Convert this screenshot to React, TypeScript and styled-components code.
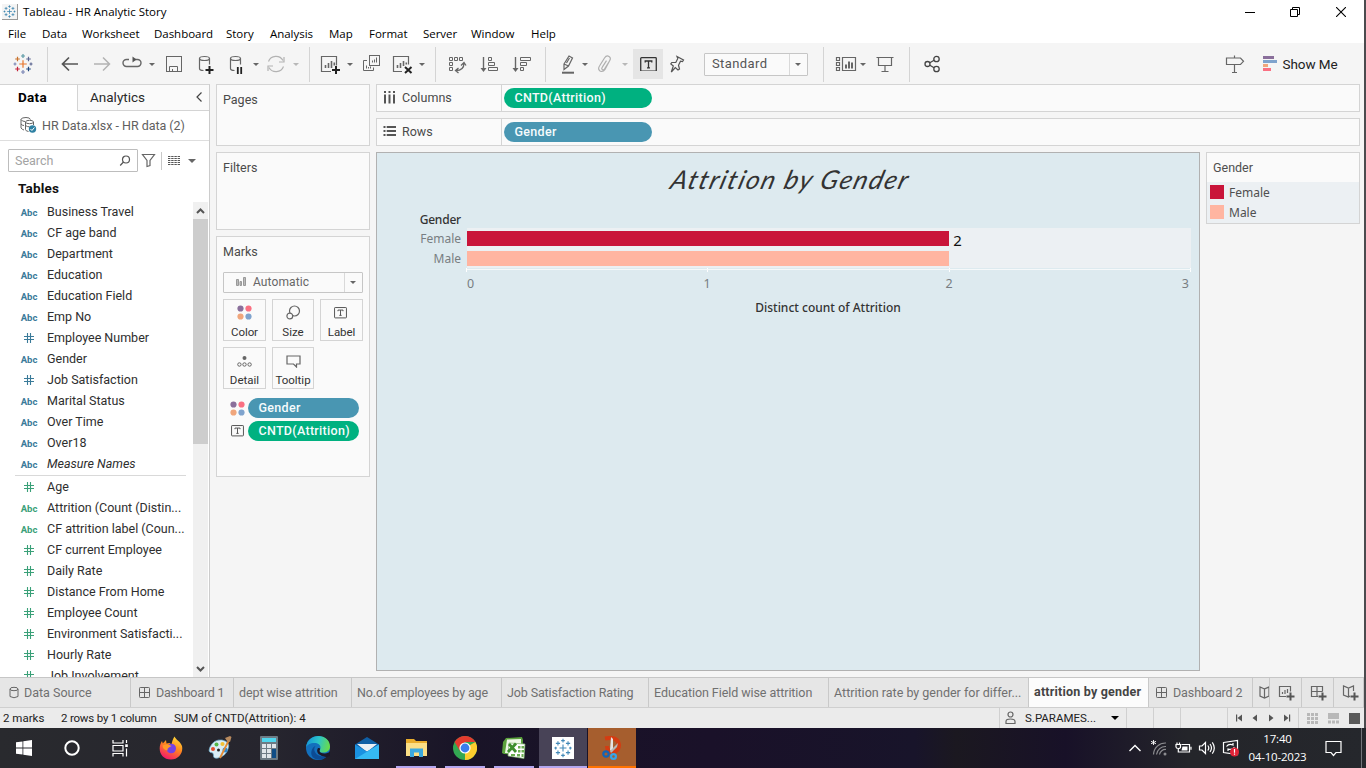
import React from "react";
import styled, { createGlobalStyle, css } from "styled-components";

const ui = `Roboto, "Open Sans", sans-serif`;
const system = `"Open Sans", "Noto Sans", sans-serif`;
const chartFont = `"Noto Sans", "Open Sans", sans-serif`;
const line = "#d4d4d4";

const GlobalStyle = createGlobalStyle`
  * { box-sizing: border-box; }
  body { margin: 0; background: #f5f5f5; overflow: hidden; }
  svg { display: block; flex: none; }
`;

type TextProps = { $ls?: number; $size?: number; $color?: string };
const Text = styled.span<TextProps>`
  white-space: nowrap;
  letter-spacing: ${(p) => p.$ls ?? 0}px;
  ${(p) => p.$size && `font-size: ${p.$size}px;`}
  ${(p) => p.$color && `color: ${p.$color};`}
`;

const Screen = styled.div`
  width: 1366px;
  height: 768px;
  display: flex;
  flex-direction: column;
  overflow: hidden;
  font-family: ${ui};
  font-size: 13px;
  color: #333;
`;
const Window = styled.div`
  height: 728px;
  flex: none;
  display: flex;
  flex-direction: column;
  background: #f5f5f5;
  border-right: 2px solid #4b4b4e;
`;

/* Title bar and menu */
const TitleBar = styled.header`
  height: 23px;
  flex: none;
  display: flex;
  align-items: center;
  background: #fff;
  padding-left: 2px;
  color: #000;
  font-family: ${system};
  font-size: 11.5px;
`;
const AppIcon = styled.div`
  width: 16px;
  height: 16px;
  margin-right: 5px;
  background: #f4f4f4;
  border-right: 1px solid #999;
  border-bottom: 1px solid #999;
`;
const WindowButtons = styled.div`
  margin-left: auto;
  display: flex;
  height: 20px;
  align-items: center;
`;
const WindowButton = styled.div`
  width: 46px;
  display: flex;
  justify-content: center;
`;
const MenuBar = styled.nav`
  height: 20px;
  flex: none;
  display: flex;
  align-items: center;
  background: #fff;
  color: #000;
  font-family: ${system};
  font-size: 11.5px;
  padding-left: 8px;
`;
const MenuItem = styled.div<{ $w: number }>`
  width: ${(p) => p.$w}px;
  letter-spacing: -0.03px;
  white-space: nowrap;
`;

/* Toolbar */
const Toolbar = styled.div`
  height: 41px;
  flex: none;
  padding-top: 1px;
  display: flex;
  align-items: center;
`;
const Tool = styled.div<{ $ml: number; $w?: number; $h?: number; $active?: boolean }>`
  margin-left: ${(p) => p.$ml}px;
  width: ${(p) => p.$w ?? 24}px;
  height: ${(p) => p.$h ?? 24}px;
  flex: none;
  display: flex;
  align-items: center;
  justify-content: center;
  ${(p) => p.$active && css`background: #e5e5e5;`}
`;
const Divider = styled.div<{ $ml: number }>`
  width: 1px;
  height: 35px;
  margin-left: ${(p) => p.$ml}px;
  background: ${line};
`;
const Caret = styled.div<{ $ml?: number; $dim?: boolean; $size?: number; $color?: string }>`
  width: 8px;
  margin-left: ${(p) => p.$ml ?? 0}px;
  flex: none;
  display: flex;
  justify-content: center;
  &::after {
    content: "";
    border: ${(p) => p.$size ?? 3}px solid transparent;
    border-top: ${(p) => p.$size ?? 3}px solid ${(p) => (p.$dim ? "#b8b8b8" : p.$color ?? "#666")};
    border-bottom: 0;
  }
`;
const Dropdown = styled.div<{ $h: number; $w: number; $ml?: number }>`
  margin-left: ${(p) => p.$ml ?? 0}px;
  width: ${(p) => p.$w}px;
  height: ${(p) => p.$h}px;
  flex: none;
  display: flex;
  border: 1px solid #c6c6c6;
  border-radius: 1px;
  color: #555;
  background: #fafafa;
`;
const DropdownValue = styled.div<{ $pad: number; $gap?: number }>`
  flex: 1;
  display: flex;
  align-items: center;
  gap: ${(p) => p.$gap ?? 0}px;
  padding: 0 0 1px ${(p) => p.$pad}px;
  border-right: 1px solid #d9d9d9;
`;
const DropdownArrow = styled.div`
  width: 17px;
  padding-right: 1px;
  display: flex;
  align-items: center;
  justify-content: center;
`;

/* Workspace */
const Workspace = styled.main`
  height: 593px;
  flex: none;
  display: flex;
  gap: 6px;
`;
const DataPane = styled.aside`
  width: 210px;
  height: 593px;
  flex: none;
  background: #fff;
  border-top: 1px solid ${line};
  border-right: 1px solid #ccc;
  display: flex;
  flex-direction: column;
`;
const PaneTabs = styled.div`
  height: 26px;
  flex: none;
  display: flex;
`;
const DataTab = styled.div`
  width: 78px;
  padding-left: 18px;
  line-height: 25px;
  font-weight: 700;
  font-size: 13.5px;
  letter-spacing: 0.3px;
  color: #000;
  border-right: 1px solid ${line};
`;
const AnalyticsTab = styled.div`
  flex: 1;
  display: flex;
  align-items: center;
  justify-content: space-between;
  padding: 0 5px 2px 12px;
  background: #fafafa;
  border-bottom: 1px solid ${line};
  font-size: 13.5px;
  color: #2a2a2a;
`;
const SourceRow = styled.div`
  height: 30px;
  flex: none;
  display: flex;
  align-items: center;
  gap: 5px;
  padding: 0 0 1px 19px;
  border-bottom: 1px solid #dedede;
  color: #5f5f5f;
  font-size: 12.5px;
`;
const SearchRow = styled.div`
  height: 39px;
  flex: none;
  display: flex;
  align-items: center;
  padding-left: 8px;
`;
const SearchBox = styled.div`
  width: 130px;
  height: 23px;
  border: 1px solid #bdbdbd;
  border-radius: 1px;
  display: flex;
  align-items: center;
  justify-content: space-between;
  padding: 0 6px;
  color: #a3a3a3;
`;
const SmallRule = styled.div`
  width: 1px;
  height: 18px;
  margin: 0 6px 0 5px;
  background: #c8c8c8;
`;
const TablesHeading = styled.div`
  height: 21px;
  flex: none;
  padding-left: 18px;
  line-height: 17px;
  font-size: 13.5px;
  letter-spacing: 0.2px;
  font-weight: 700;
  color: #111;
`;
const FieldArea = styled.div`
  flex: 1;
  min-height: 0;
  display: flex;
  overflow: hidden;
`;
const FieldList = styled.div`
  flex: 1;
  min-width: 0;
`;
const FieldRow = styled.div<{ $italic?: boolean }>`
  height: 21px;
  display: flex;
  align-items: center;
  color: #2e2e2e;
  font-size: 12.5px;
  ${(p) => p.$italic && "font-style: italic;"}
`;
const FieldType = styled.div<{ $measure: boolean }>`
  width: 18px;
  margin: 1px 9px 0 20px;
  display: flex;
  justify-content: center;
  font-size: 9.5px;
  font-weight: 700;
  font-style: normal;
  color: ${(p) => (p.$measure ? "#3aa078" : "#3a7a99")};
`;
const FieldRule = styled.div`
  height: 1px;
  margin: 1px 7px 0 15px;
  background: #d9d9d9;
`;
const Scrollbar = styled.div`
  width: 15px;
  margin: 1px 1px 0 0;
  display: flex;
  flex-direction: column;
  justify-content: space-between;
  align-items: center;
  background: #f0f0f0;
  padding-bottom: 5px;
`;
const ScrollTop = styled.div`
  width: 15px;
  & > svg { margin: 6px auto 5px; }
`;
const Thumb = styled.div`
  height: 225px;
  background: #cdcdcd;
`;

/* Shelves and cards */
const CardColumn = styled.div`
  width: 154px;
  flex: none;
  display: flex;
  flex-direction: column;
  gap: 6px;
`;
const Card = styled.section<{ $h: number }>`
  height: ${(p) => p.$h}px;
  flex: none;
  background: #fafafa;
  border: 1px solid ${line};
  padding: 0 6px;
  color: #4a4a4a;
  font-size: 12.5px;
`;
const CardTitle = styled.div<{ $h?: number }>`
  height: ${(p) => p.$h ?? 30}px;
  line-height: 30px;
`;
const MarkGrid = styled.div`
  display: grid;
  grid-template-columns: 43px 42px 43px;
  grid-auto-rows: 42px;
  gap: 6px;
  margin-top: 6px;
`;
const MarkButton = styled.div`
  border: 1px solid ${line};
  display: flex;
  flex-direction: column;
  align-items: center;
  justify-content: space-between;
  padding: 5px 0 1px;
  color: #333;
  font-size: 11.5px;
  letter-spacing: -0.05px;
`;
const MarkPills = styled.div`
  display: flex;
  flex-direction: column;
  gap: 3px;
  margin-top: 9px;
`;
const MarkPillRow = styled.div`
  display: flex;
  align-items: center;
  padding-left: 7px;
  gap: 3px;
`;
const Pill = styled.div<{ $green?: boolean; $w: number }>`
  width: ${(p) => p.$w}px;
  height: 20px;
  border-radius: 10px;
  padding-left: 10.5px;
  line-height: 20px;
  font-size: 12.5px;
  font-weight: 500;
  letter-spacing: 0.3px;
  white-space: nowrap;
  color: #f5fbfc;
  background: ${(p) => (p.$green ? "#00b180" : "#4996b2")};
`;
const MainColumn = styled.div`
  width: 984px;
  flex: none;
  display: flex;
  flex-direction: column;
  gap: 6px;
`;
const Shelf = styled.div`
  height: 28px;
  flex: none;
  display: flex;
  align-items: center;
  border: 1px solid ${line};
  background: #fafafa;
  font-size: 12.5px;
  color: #4a4a4a;
`;
const ShelfLabel = styled.div`
  width: 125px;
  height: 26px;
  display: flex;
  align-items: center;
  gap: 6px;
  padding: 0 0 1px 6px;
  margin-right: 2px;
  border-right: 1px solid ${line};
`;
const ViewRow = styled.div`
  display: flex;
  gap: 6px;
  align-items: flex-start;
`;

/* Chart */
const View = styled.section`
  width: 824px;
  height: 519px;
  flex: none;
  display: flex;
  flex-direction: column;
  background: #ddeaef;
  border: 1px solid #b1b1b1;
  font-family: ${chartFont};
  font-size: 12px;
  color: #787e82;
`;
const ChartTitle = styled.h1`
  margin: 0;
  height: 58px;
  line-height: 53px;
  text-align: center;
  font-family: Lato, sans-serif;
  font-style: italic;
  font-weight: 400;
  font-size: 26px;
  letter-spacing: 1.6px;
  color: #333;
  padding-left: 4px;
  transform: skewX(-16deg);
`;
const ChartBody = styled.div`
  display: grid;
  grid-template-columns: 84px 6px 724px;
  text-align: right;
`;
const Dimension = styled.div`
  height: 18px;
  line-height: 17px;
  color: #333;
  font-weight: 500;
  letter-spacing: -0.2px;
`;
const RowLabel = styled.div`
  height: 20px;
  line-height: 20px;
`;
const Plot = styled.div`
  height: 40px;
  margin-top: 17px;
  padding-top: 3px;
  display: flex;
  flex-direction: column;
  gap: 5px;
  background: #ecf0f3;
`;
const BarRow = styled.div`
  height: 15px;
  display: flex;
  align-items: center;
`;
const Bar = styled.div<{ $color: string }>`
  height: 15px;
  background: ${(p) => p.$color};
`;
const BarValue = styled.span`
  margin: 4px 0 0 4px;
  font-size: 15px;
  line-height: 15px;
  color: #111;
`;
const Ticks = styled.div`
  grid-column: 3;
  height: 4px;
  margin: -1px 0 -3px -1px;
  display: flex;
  justify-content: space-between;
  & > i { width: 1px; background: #fff; }
`;
const Axis = styled.div`
  grid-column: 3;
  height: 28px;
  display: grid;
  grid-template-columns: 120px 240px 244px 1fr;
  align-items: end;
  border-top: 1px solid #f6f9fa;
  font-size: 12.5px;
  padding: 0 2px 5px 0;
  text-align: center;
  line-height: 17px;
  & > :first-child { text-align: left; }
  & > :last-child { text-align: right; }
`;
const AxisTitle = styled.div`
  grid-column: 3;
  line-height: 16px;
  margin-top: 3px;
  text-align: center;
  padding-right: 2px;
  font-weight: 500;
  color: #333;
`;
const Legend = styled.section`
  width: 154px;
  height: 72px;
  background: #fafafa;
  border: 1px solid ${line};
  display: flex;
  flex-direction: column;
  color: #4f4f4f;
  font-family: ${chartFont};
  font-size: 12px;
`;
const LegendTitle = styled.div`
  height: 29px;
  line-height: 30px;
  padding-left: 6px;
  font-family: ${ui};
  font-size: 12.5px;
`;
const LegendItems = styled.div`
  flex: 1;
  background: #ecf0f3;
`;
const LegendItem = styled.div<{ $color: string }>`
  height: 20px;
  display: flex;
  align-items: center;
  gap: 5px;
  padding-left: 3px;
  &::before {
    content: "";
    width: 14px;
    height: 14px;
    background: ${(p) => p.$color};
  }
`;

/* Sheet tabs and status bar */
const SheetTabs = styled.div`
  height: 31px;
  flex: none;
  display: flex;
  border-top: 1px solid #c6c6c6;
  border-bottom: 1px solid #cfcfcf;
  background: #e6e6e6;
`;
const SheetTab = styled.div<{ $w: number; $active?: boolean; $pad?: number }>`
  width: ${(p) => p.$w}px;
  flex: none;
  display: flex;
  align-items: center;
  gap: 5px;
  overflow: hidden;
  padding-left: ${(p) => p.$pad ?? 5}px;
  border-right: 1px solid #c9c9c9;
  color: #707070;
  font-size: 12.5px;
  letter-spacing: -0.07px;
  ${(p) => p.$active && css`
    background: #fcfcfc;
    color: #444;
    font-weight: 700;
    padding-bottom: 2px;
  `}
`;
const StatusBar = styled.div`
  height: 20px;
  flex: none;
  display: flex;
  align-items: center;
  background: #ebebeb;
  color: #222;
  font-size: 11.5px;
  padding-left: 3px;
`;
const StatusText = styled.div<{ $w: number }>`
  width: ${(p) => p.$w}px;
  flex: none;
  white-space: nowrap;
`;
const StatusCell = styled.div<{ $w: number }>`
  width: ${(p) => p.$w}px;
  height: 20px;
  flex: none;
  display: flex;
  align-items: center;
  border-left: 1px solid #d0d0d0;
`;

/* Taskbar */
const Taskbar = styled.footer`
  height: 40px;
  flex: none;
  display: flex;
  background: linear-gradient(90deg, #292a2e 0%, #26252e 20%, #191427 34%, #1a1129 52%, #18142a 67%, #1b1820 70%, #181128 78%, #24252a 87%, #25272c 100%);
  color: #fff;
`;
const TaskButton = styled.div<{ $w?: number; $bar?: string; $bg?: string }>`
  width: ${(p) => p.$w ?? 48}px;
  height: 40px;
  flex: none;
  margin-right: ${(p) => (p.$w ? 0 : 1)}px;
  display: flex;
  align-items: center;
  justify-content: center;
  background: ${(p) => p.$bg ?? "transparent"};
  border-bottom: 2px solid ${(p) => p.$bar ?? "transparent"};
  border-top: 2px solid ${(p) => p.$bg ?? "transparent"};
  ${(p) => p.$bar && !p.$bg && css`
    width: 40px;
    margin: 0 5px 0 4px;
  `}
`;
const TableauTile = styled.div`
  width: 22px;
  height: 22px;
  background: #fff;
`;
const Tray = styled.div`
  margin-left: auto;
  display: flex;
  align-items: center;
`;
const TrayItem = styled.div<{ $w?: number }>`
  width: ${(p) => p.$w ?? 24}px;
  display: flex;
  justify-content: center;
`;
const Clock = styled.div`
  width: 70px;
  padding-right: 1px;
  text-align: center;
  font-family: ${system};
  font-size: 11.5px;
  line-height: 18px;
  letter-spacing: -0.2px;
`;
const PeekLine = styled.div`
  width: 1px;
  height: 40px;
  margin: 0 4px 0 8px;
  background: #72747a;
`;

/* Icons */
type IcoProps = { c?: string; s?: number; h?: number; sw?: number; children: React.ReactNode };
const Ico = ({ c = "#666", s = 24, h, sw = 1.2, children }: IcoProps) => (
  <svg width={s} height={h ?? s} viewBox={`0 0 ${s} ${h ?? s}`} fill="none" stroke={c} strokeWidth={sw}>
    {children}
  </svg>
);

const marks: [number, number, number, string][] = [
  [12, 12, 3.8, "#e8762c"], [6.5, 7, 2.3, "#c8722c"], [17.5, 7, 2.3, "#5c6692"],
  [6.5, 17, 2.3, "#c4243b"], [17.5, 17, 2.3, "#1f457d"], [12, 4, 2, "#5b9aa5"],
  [12, 20, 2, "#7b86b5"], [4, 12, 1.5, "#7b86b5"], [20, 12, 1.5, "#5c6692"],
];
const TableauMark = ({ size = 24, mono }: { size?: number; mono?: string }) => (
  <svg width={size} height={size} viewBox="0 0 24 24" fill="none" strokeWidth="1.2">
    {marks.map(([x, y, r, c], i) => (
      <path key={i} stroke={mono ?? c} d={`M${x - r} ${y}h${2 * r}M${x} ${y - r}v${2 * r}`} />
    ))}
  </svg>
);

const Cylinder = () => (
  <>
    <ellipse cx="11.500" cy="6.500" rx="5" ry="2" />
    <path d="M6.500 6.500v10q0 2 4 2M16.500 6.500v6" />
  </>
);
const LabelIcon = ({ s = 17, c = "#555" }: { s?: number; c?: string }) => (
  <svg width={s} height={s * 0.88} viewBox="0 0 17 15" fill="none" stroke={c} strokeWidth="1.3">
    <rect x="0.700" y="0.700" width="15.600" height="13.600" rx="0.800" />
    <path d="M5.200 5.500v-1.500h6.600v1.500M8.500 4v7M7 11h3" />
  </svg>
);
const ColorDots = () => (
  <svg width="15" height="15" viewBox="0 0 15 15">
    <circle cx="3.500" cy="3.500" r="3.100" fill="#8a6f9b" />
    <circle cx="11.500" cy="3.500" r="3.100" fill="#fa7082" />
    <circle cx="3.500" cy="11.500" r="3.100" fill="#f0a67c" />
    <circle cx="11.500" cy="11.500" r="3.100" fill="#7fa3cd" />
  </svg>
);
const HashIcon = () => (
  <svg width="12" height="10" viewBox="0 0 12 10" fill="none" stroke="currentColor" strokeWidth="1.1">
    <path d="M4.500 0v10M7.500 0v10M1 3.500h10M1 6.500h10" />
  </svg>
);
const GridIcon = () => (
  <Ico s={12} sw={1}><rect x="0.500" y="0.500" width="10" height="10" rx="0.800" /><path d="M5.500 0.500v10M0.500 5.500h10" /></Ico>
);

const dimensions: [string, string][] = [
  ["Abc", "Business Travel"], ["Abc", "CF age band"], ["Abc", "Department"],
  ["Abc", "Education"], ["Abc", "Education Field"], ["Abc", "Emp No"],
  ["#", "Employee Number"], ["Abc", "Gender"], ["#", "Job Satisfaction"],
  ["Abc", "Marital Status"], ["Abc", "Over Time"], ["Abc", "Over18"], ["Abc", "Measure Names"],
];
const measures: [string, string][] = [
  ["#", "Age"], ["Abc", "Attrition (Count (Distin..."], ["Abc", "CF attrition label (Coun..."],
  ["#", "CF current Employee"], ["#", "Daily Rate"], ["#", "Distance From Home"],
  ["#", "Employee Count"], ["#", "Environment Satisfacti..."], ["#", "Hourly Rate"], ["#", "Job Involvement"],
];

const Field = ({ type, name, measure }: { type: string; name: string; measure?: boolean }) => (
  <FieldRow $italic={name === "Measure Names"}>
    <FieldType $measure={!!measure}>{type === "#" ? <HashIcon /> : type}</FieldType>
    {name}
  </FieldRow>
);

const ToolbarSection = () => (
  <Toolbar>
    <Tool $ml={11}><TableauMark size={24} /></Tool>
    <Divider $ml={12} />
    <Tool $ml={10}><Ico c="#555" sw={1.7}><path d="M20 12H5M11 5.500L4.500 12l6.500 6.500" /></Ico></Tool>
    <Tool $ml={8}><Ico c="#b3b3b3" sw={1.5}><path d="M4 12h15M13 5.500l6.500 6.500-6.500 6.500" /></Ico></Tool>
    <Tool $ml={6}><Ico sw={1.4}><path d="M9 7.500H6.500a3.500 3.500 0 0 0 0 7h11a3.500 3.500 0 0 0 0-7h-4.500" /><path d="M12.500 4.500v6l4-3z" fill="#555" stroke="none" /></Ico></Tool>
    <Caret $ml={4} />
    <Tool $ml={6}><Ico sw={1}><rect x="4.500" y="4.500" width="15" height="15" /><path d="M7.500 19.500v-5h8v5M10.500 19.500v-2.500" /></Ico></Tool>
    <Tool $ml={7}><Ico><Cylinder /><path d="M12.500 18h8M16.500 14v8" stroke="#222" strokeWidth="2" /></Ico></Tool>
    <Tool $ml={7}><Ico><Cylinder /><path d="M13.800 15v7M17.200 15v7" stroke="#222" strokeWidth="1.800" /></Ico></Tool>
    <Caret $ml={4} />
    <Tool $ml={4}><Ico c="#b3b3b3"><path d="M4.500 9.500a8 8 0 0 1 14.500-1M19.500 14.500a8 8 0 0 1-14.500 1" /><path d="M20 5v5h-5M4 19v-5h5" /></Ico></Tool>
    <Caret $ml={4} $dim />
    <Divider $ml={9} />
    <Tool $ml={8}><Ico><path d="M13 19.500H3.500v-15h15v9" /><path d="M7.500 16v-3M10.500 16v-5M13.500 16V9M16.300 13.500v-3" strokeWidth="1.600" /><path d="M14 18h8M18 14v8" stroke="#222" strokeWidth="2" /></Ico></Tool>
    <Caret $ml={4} />
    <Tool $ml={5}><Ico sw={1}><rect x="10.500" y="3.500" width="10" height="10" /><path d="M8 8.500H4.500v10h10v-3M7.500 16.500v-3M9.500 16.500v-1.500M11.500 16.500v-2M13.500 10.500v-2M15.500 10.500v-3M17.500 10.500v-5" /></Ico></Tool>
    <Tool $ml={7}><Ico><path d="M12 19.500H3.500v-15h15v8" /><path d="M7.500 16v-3M10.500 16v-5M13.500 14V9M16.300 12.500v-2" strokeWidth="1.600" /><path d="M15 15l6.500 6M21.500 15L15 21" stroke="#222" strokeWidth="2" /></Ico></Tool>
    <Caret $ml={4} />
    <Divider $ml={9} />
    <Tool $ml={9}><Ico sw={1}><path d="M4.500 5.500h3v3h-3zM9.500 5.500h3v3h-3zM14.500 5.500h3v3h-3zM4.500 10.500h3v3h-3zM4.500 15.500h3v3h-3z" /><path d="M11 18.500q8 0 8-7.500M16 13.500l3-3 2 3M13.500 16l-3 2.500 3 2.500" strokeWidth="1.300" /></Ico></Tool>
    <Tool $ml={9}><Ico><path d="M5.500 5v13" strokeWidth="1.400" /><path d="M2.500 16h6l-3 4z" fill="#666" stroke="none" /><path d="M10.500 5.500h3v3h-3zM10.500 10.500h6v3h-6zM10.500 15.500h9v3h-9z" strokeWidth="1" /></Ico></Tool>
    <Tool $ml={8}><Ico><path d="M5.500 5v13" strokeWidth="1.400" /><path d="M2.500 16h6l-3 4z" fill="#666" stroke="none" /><path d="M10.500 5.500h10v3h-10zM10.500 10.500h6v3h-6zM10.500 15.500h3v3h-3z" strokeWidth="1" /></Ico></Tool>
    <Divider $ml={11} />
    <Tool $ml={9}><Ico><path d="M9 12L14 4l3.500 2-4 8-4.500 3.500zM9 12l4.500 2M14.500 6l-3 5" /><path d="M7 20.700h12" strokeWidth="2" /></Ico></Tool>
    <Caret $ml={2} />
    <Tool $ml={4}><Ico c="#b0b0b0"><path d="M17 8l-5 9.500q-2 3-5 1.500-2.500-2-.5-5l5-8q2-3 4.500-1.500 2.500 1.500.5 4.500l-5 8q-1 1.500-2.200.700-1.200-1 0-2.500l4.200-6.500" /></Ico></Tool>
    <Caret $ml={4} $dim />
    <Tool $ml={4} $w={30} $h={30} $active><LabelIcon c="#333" /></Tool>
    <Tool $ml={2}><Ico c="#555"><path d="M12 4.500l6.500 3.500-1 1.500-2-.300-2 4 1 3.800-1.500 1-2.700-2.500-4 4.500 2-6-2.500-2 1-1.500h4l2-4z" /></Ico></Tool>
    <Dropdown $ml={15} $w={104} $h={23}>
      <DropdownValue $pad={7}><Text $size={13} $ls={0.4}>Standard</Text></DropdownValue>
      <DropdownArrow><Caret $size={3.5} /></DropdownArrow>
    </Dropdown>
    <Divider $ml={15} />
    <Tool $ml={10}><Ico><path d="M2.500 5.500h3v3h-3zM2.500 10.500h3v3h-3zM2.500 15.500h3v3h-3zM8.500 5.500h13v13h-13z" /><path d="M12 16.500v-4M15 16.500V9.500M18 16.500v-6" strokeWidth="2" /></Ico></Tool>
    <Caret $ml={1} />
    <Tool $ml={6}><Ico><path d="M3.500 5.500h17M5.500 5.500v8h13v-8M12 13.500v6M8.500 19.500h7" /></Ico></Tool>
    <Divider $ml={12} />
    <Tool $ml={10}><Ico c="#444" sw={1.3}><circle cx="7.500" cy="12" r="2.500" /><circle cx="16.500" cy="7" r="2.700" /><circle cx="16.500" cy="17" r="2.700" /><path d="M9.800 10.800l4.300-2.600M9.800 13.200l4.300 2.600" /></Ico></Tool>
    <Tool $ml={278}><Ico><path d="M4.500 6h14l3 3.300-3 3.200h-14zM12.500 3.500v2.500M12.500 12.500v8.500M10 20.500h5" /></Ico></Tool>
    <Tool $ml={17} $w={14}>
      <svg width="14" height="16" viewBox="0 0 14 16">
        <path fill="#8a6f9b" d="M0 0h11v3H0z" /><path fill="#7fa3cd" d="M0 4h14v3H0z" />
        <path fill="#f0a67c" d="M0 8h5v3H0z" /><path fill="#fa7082" d="M0 12h8v3H0z" />
      </svg>
    </Tool>
    <Tool $ml={5} $w={56}><Text $size={13.5} $ls={-0.1} $color="#222">Show Me</Text></Tool>
  </Toolbar>
);

const DataSection = () => (
  <DataPane>
    <PaneTabs>
      <DataTab>Data</DataTab>
      <AnalyticsTab>
        Analytics
        <Ico s={10} h={12} c="#444"><path d="M7.500 1.500L3 6l4.500 4.500" /></Ico>
      </AnalyticsTab>
    </PaneTabs>
    <SourceRow>
      <Ico s={18} sw={1}>
        <path d="M2 12V3.500Q2 1.500 7 1.500q4 0 4.500 2M2 3.500Q3 5.500 6 5.500M2 8q1 1.500 3 1.500M2 12q1 1.500 3 2" />
        <ellipse cx="10.500" cy="6" rx="4" ry="1.700" /><path d="M6.500 6v7.500q0 1.500 3 2M14.500 6v3M6.500 9.500q2 1.500 4 1.300" />
        <circle cx="13.500" cy="13" r="3.700" fill="#2f81a3" stroke="none" /><path d="M11.500 13l1.400 1.500 2.500-3" stroke="#fff" />
      </Ico>
      <Text $ls={-0.03}>HR Data.xlsx - HR data (2)</Text>
    </SourceRow>
    <SearchRow>
      <SearchBox>
        <Text $size={12.5}>Search</Text>
        <Ico s={12} c="#555"><circle cx="7" cy="4.500" r="3.500" /><path d="M4.500 7L1.200 10.500" /></Ico>
      </SearchBox>
      <Tool $ml={3} $w={15} $h={15}><Ico s={15}><path d="M1.500 1.500h12L9 7.500v5l-3 1v-6z" /></Ico></Tool>
      <SmallRule />
      <Ico s={12} h={10} sw={1} c="#555"><path d="M0 0.500h12M0 2.500h12M0 4.500h12M0 6.500h12M0 8.500h12" strokeDasharray="2.400 0.800" /></Ico>
      <Caret $ml={8} $size={4} />
    </SearchRow>
    <TablesHeading>Tables</TablesHeading>
    <FieldArea>
      <FieldList>
        {dimensions.map(([t, n]) => <Field key={n} type={t} name={n} />)}
        <FieldRule />
        {measures.map(([t, n]) => <Field key={n} type={t} name={n} measure />)}
      </FieldList>
      <Scrollbar>
        <ScrollTop>
          <Ico s={9} h={6} c="#555" sw={2}><path d="M1 5l3.500-3.500L8 5" /></Ico>
          <Thumb />
        </ScrollTop>
        <Ico s={9} h={6} c="#555" sw={2}><path d="M1 1l3.500 3.500L8 1" /></Ico>
      </Scrollbar>
    </FieldArea>
  </DataPane>
);

const CardsSection = () => (
  <CardColumn>
    <Card $h={62}><CardTitle>Pages</CardTitle></Card>
    <Card $h={78}><CardTitle>Filters</CardTitle></Card>
    <Card $h={241}>
      <CardTitle $h={35}>Marks</CardTitle>
      <Dropdown $w={140} $h={21}>
        <DropdownValue $pad={12} $gap={7}>
          <Ico s={10} sw={1} c="#999"><path d="M0.500 2.500h2v6h-2zM4 4.500h1.500v4H4zM7.500 0.500h2v8h-2z" fill="#bbb" /></Ico>
          <Text $size={12} $ls={0.1} $color="#666">Automatic</Text>
        </DropdownValue>
        <DropdownArrow><Caret $size={3.5} /></DropdownArrow>
      </Dropdown>
      <MarkGrid>
        <MarkButton><ColorDots /><Text $ls={-0.1}>Color</Text></MarkButton>
        <MarkButton><Ico s={15}><circle cx="8.500" cy="6" r="5" /><circle cx="3.800" cy="11" r="2.900" fill="#fafafa" /></Ico><Text>Size</Text></MarkButton>
        <MarkButton><Tool $ml={-2} $w={14} $h={16}><LabelIcon s={13} /></Tool><Text $ls={-0.1}>Label</Text></MarkButton>
        <MarkButton><Ico s={15} sw={1}><circle cx="7.500" cy="5" r="2" fill="#666" stroke="none" /><circle cx="2.400" cy="11.500" r="1.700" /><circle cx="7.500" cy="11.500" r="1.700" /><circle cx="12.600" cy="11.500" r="1.700" /></Ico><Text>Detail</Text></MarkButton>
        <MarkButton><Ico s={15}><path d="M1 3h13v8h-3.500v3L7.500 11H1z" /></Ico><Text>Tooltip</Text></MarkButton>
      </MarkGrid>
      <MarkPills>
        <MarkPillRow><ColorDots /><Pill $w={111}>Gender</Pill></MarkPillRow>
        <MarkPillRow><Tool $ml={-1} $w={16} $h={16}><LabelIcon s={13} /></Tool><Pill $green $w={111}>CNTD(Attrition)</Pill></MarkPillRow>
      </MarkPills>
    </Card>
  </CardColumn>
);

const bars = [
  { name: "Female", value: 2, color: "#c9153a", label: true },
  { name: "Male", value: 2, color: "#ffb5a1", label: false },
];
const AXIS_MAX = 3;

const MainSection = () => (
  <MainColumn>
    <Shelf>
      <ShelfLabel><Ico s={13} sw={2} c="#555"><path d="M2 0v2M6.500 0v2M11 0v2M2 3.500v9M6.500 3.500v9M11 3.500v9" /></Ico><Text $ls={0.05}>Columns</Text></ShelfLabel>
      <Pill $green $w={148}>CNTD(Attrition)</Pill>
    </Shelf>
    <Shelf>
      <ShelfLabel><Ico s={13} sw={1.8} c="#555"><path d="M0.500 2h2M3.700 2H13M0.500 6h2M3.700 6H13M0.500 10h2M3.700 10H13" /></Ico><Text>Rows</Text></ShelfLabel>
      <Pill $w={148}>Gender</Pill>
    </Shelf>
    <ViewRow>
      <View>
        <ChartTitle>Attrition by Gender</ChartTitle>
        <ChartBody>
          <div>
            <Dimension>Gender</Dimension>
            {bars.map((b) => <RowLabel key={b.name}>{b.name}</RowLabel>)}
          </div>
          <div />
          <Plot>
            {bars.map((b) => (
              <BarRow key={b.name}>
                <Bar $color={b.color} style={{ width: `${(b.value / AXIS_MAX) * 99.9}%` }} />
                {b.label && <BarValue>{b.value}</BarValue>}
              </BarRow>
            ))}
          </Plot>
          <Ticks><i /><i /><i /><i /></Ticks>
          <Axis><span>0</span><span>1</span><span>2</span><span>3</span></Axis>
          <AxisTitle>Distinct count of Attrition</AxisTitle>
        </ChartBody>
      </View>
      <Legend>
        <LegendTitle>Gender</LegendTitle>
        <LegendItems>{bars.map((b) => <LegendItem key={b.name} $color={b.color}>{b.name}</LegendItem>)}</LegendItems>
      </Legend>
    </ViewRow>
  </MainColumn>
);

const Plus = () => <path d="M8.500 12.500h8M12.500 8.500v8" strokeWidth="2" stroke="#555" />;

const BottomSection = () => (
  <>
    <SheetTabs>
      <SheetTab $w={131} $pad={9}>
        <Ico s={10} h={13} sw={1}><ellipse cx="5" cy="3" rx="4" ry="1.700" /><path d="M1 3v7.500q4 2.500 8 0V3" /></Ico>
        <Text>Data Source</Text>
      </SheetTab>
      <SheetTab $w={103} $pad={8}><GridIcon /><Text $ls={-0.2}>Dashboard 1</Text></SheetTab>
      <SheetTab $w={118}>dept wise attrition</SheetTab>
      <SheetTab $w={150}><Text $ls={-0.12}>No.of employees by age</Text></SheetTab>
      <SheetTab $w={147}><Text $ls={-0.13}>Job Satisfaction Rating</Text></SheetTab>
      <SheetTab $w={180}>Education Field wise attrition</SheetTab>
      <SheetTab $w={200}><Text>Attrition rate by gender for differ...</Text></SheetTab>
      <SheetTab $w={120} $active><Text $ls={0.2}>attrition by gender</Text></SheetTab>
      <SheetTab $w={104} $pad={7}><GridIcon /><Text $ls={-0.1}>Dashboard 2</Text></SheetTab>
      <SheetTab $w={17} $pad={6}><Ico s={13}><path d="M5.500 3L1 1v9l4.500 2L10 10V1L5.500 3v9" /></Ico></SheetTab>
      <SheetTab $w={32} $pad={8}><Ico s={18}><path d="M8 12.500H1.500v-10h11v5M4.500 10V8M7 10V6M9.500 9V5" /><Plus /></Ico></SheetTab>
      <SheetTab $w={32} $pad={8}><Ico s={18}><path d="M8 12.500H1.500v-10h11v5M7 2.500v10M1.500 7.500h11" /><Plus /></Ico></SheetTab>
      <SheetTab $w={30} $pad={8}><Ico s={18}><path d="M8 12L6.500 13l-5-2V2l5 2 5-2v5M6.500 4v9" /><Plus /></Ico></SheetTab>
    </SheetTabs>
    <StatusBar>
      <StatusText $w={58}>2 marks</StatusText>
      <StatusText $w={113}><Text $ls={-0.2}>2 rows by 1 column</Text></StatusText>
      <StatusText $w={825}>SUM of CNTD(Attrition): 4</StatusText>
      <StatusCell $w={127}>
        <Tool $ml={5} $w={12} $h={16}><Ico s={12} h={14}><circle cx="5.500" cy="3.500" r="2.500" /><path d="M1 12.500V10.500q0-2.500 4.500-2.500t4.500 2.500v2z" /></Ico></Tool>
        <Tool $ml={8} $w={71}><Text $size={11.5}>S.PARAMES...</Text></Tool>
        <Caret $ml={15} $size={4} $color="#000" />
      </StatusCell>
      <StatusCell $w={27} /><StatusCell $w={27} /><StatusCell $w={47} />
      <StatusCell $w={71}>
        <svg width="70" height="12" viewBox="0 0 70 12" fill="#555">
          <path d="M8 2.500h1.200v7H8zM14 2.500v7L9.500 6zM29 2.500v7L24.500 6zM41 2.500v7L45.500 6zM56 2.500v7L60.500 6zM61 2.500h1.200v7H61z" />
        </svg>
      </StatusCell>
      <StatusCell $w={65}>
        <svg width="64" height="14" viewBox="0 0 64 14" fill="#b8b8b8">
          <path d="M8 2h3v3H8zM12 2h3v3h-3zM16 2h3v3h-3zM8 6h3v3H8zM12 6h3v3h-3zM16 6h3v3h-3zM8 10h3v3H8zM12 10h3v3h-3zM16 10h3v3h-3zM29 2h11v6H29zM29 9.500h3v3h-3zM33 9.500h3v3h-3zM37 9.500h3v3h-3z" />
          <path d="M50 2h11v11H50z" fill="#595959" />
        </svg>
      </StatusCell>
    </StatusBar>
  </>
);

const TaskbarSection = () => (
  <Taskbar>
    <TaskButton $w={48}><svg width="16" height="16" viewBox="0 0 16 16" fill="#fff"><path d="M0 2.300L6.500 1.400v6.200H0zM7.300 1.300L16 0v7.600H7.300zM0 8.400h6.500v6.200L0 13.700zM7.300 8.400H16V16l-8.700-1.300z" /></svg></TaskButton>
    <TaskButton $w={48}><Ico s={16} c="#fff" sw={2}><circle cx="8" cy="8" r="6.700" /></Ico></TaskButton>
    <TaskButton $w={48}><Ico s={17} c="#fff"><path d="M1 0v3h10V0M1 16.500v-3h10v3M1 5.500h10v5.500H1zM14.500 0v3M14.500 8.500v8" /><path d="M13.200 4.300h2.600v2.700h-2.600z" fill="#fff" stroke="none" /></Ico></TaskButton>
    <TaskButton $w={3} />
    <TaskButton>
      <svg width="24" height="24" viewBox="0 0 24 24">
        <defs><linearGradient id="ff" x1="0.800" y1="0" x2="0.300" y2="1"><stop offset="0" stopColor="#ffe03b" /><stop offset="0.450" stopColor="#ff8a1f" /><stop offset="1" stopColor="#f5156c" /></linearGradient></defs>
        <path fill="url(#ff)" d="M15.500 0.500c1 3 6 5 7.500 9.500 1.500 7-3.500 13.500-11 13.500S0.500 18 0.700 12c.1-3 1-5 2.300-7l.8 2.500L7 4l.5 3.500 3-.5 2 1.500c.5-3 1.500-6 3-8z" />
        <circle cx="12.200" cy="12.500" r="4.800" fill="#7542e5" />
        <path fill="#ff9a28" d="M3.500 9.500Q8 7.500 12.500 10L10 11.500q-2 1-1.500 3Q4 14 3.500 9.500z" />
      </svg>
    </TaskButton>
    <TaskButton>
      <svg width="24" height="24" viewBox="0 0 24 24">
        <path fill="#d9edf6" stroke="#6aaccb" strokeWidth="0.700" d="M2 11Q6 3 14 4q9 2 6 9-2 7-10 9-5 1-4.500-3 0-3-3-2.500-2.500-1-.5-5.500z" />
        <circle cx="5" cy="13" r="2" fill="#e34e2e" /><circle cx="8.500" cy="8.500" r="2" fill="#54b948" /><circle cx="14.500" cy="8" r="2.100" fill="#f2c035" /><circle cx="17" cy="14" r="2.500" fill="#2d88cf" /><circle cx="10.500" cy="14" r="1.500" fill="#222" />
        <path d="M21 4L12 22" stroke="#e28b35" strokeWidth="1.800" /><path fill="#b88a5e" d="M17 2l5-2 1.500 1-1.500 5-3-1z" />
      </svg>
    </TaskButton>
    <TaskButton>
      <svg width="18" height="24" viewBox="0 0 18 24">
        <rect width="18" height="24" rx="1" fill="#6d7b85" /><path fill="#50d5ed" d="M2 2h14v4H2z" />
        <path fill="#dfe5ea" d="M2 8h4v4H2zM7 8h4v4H7zM12 8h4v4h-4zM2 13h4v4H2zM7 13h4v4H7zM2 18h4v4H2zM7 18h4v4H7z" /><path fill="#0f4d86" d="M12 13h4v9h-4z" />
      </svg>
    </TaskButton>
    <TaskButton>
      <svg width="24" height="24" viewBox="0 0 24 24">
        <defs><linearGradient id="ed" x1="0" y1="0.300" x2="1" y2="0.500"><stop offset="0" stopColor="#1595d8" /><stop offset="0.500" stopColor="#2cc5c9" /><stop offset="1" stopColor="#69dc4a" /></linearGradient></defs>
        <circle cx="12" cy="12" r="12" fill="#1370bd" />
        <path fill="url(#ed)" d="M0 11.500C1 4 6 0 12.500 0 19 0 24 4.500 24 10.500c0 4-3 6-7 6-3 0-3.500-1-3.500-1.800 0-1 1-1.500 1-3.200C14.500 9 12 7 8.500 7 4 7 1 9 0 11.500z" />
        <path fill="#0c4b94" d="M9.500 10C6 14 10 21 18 20.500l3.500-1Q18 24.500 11 23.500 4 22 5.500 15 6.500 11 9.500 10z" />
        <path fill="#1d1929" d="M13.500 14.700c0 1.800 2.500 3 5.500 2.800 2-.2 4-1 5-2v4.500l-3 1Q17 21.500 12.500 18q-2.500-3-.5-6 2-.5 2.200 1z" />
      </svg>
    </TaskButton>
    <TaskButton>
      <svg width="24" height="24" viewBox="0 0 24 24">
        <path fill="#0f5fa5" d="M0 8.500L12 1l12 7.500V14H0z" /><path fill="#e9eff4" d="M2 8h20l-10 8z" /><path fill="#1a91e0" d="M0 8.500L12 15.500 24 8.500V23H0z" /><path fill="#35b9f3" d="M0 23L24 8.500V23z" />
      </svg>
    </TaskButton>
    <TaskButton $bar="#b3a6ef">
      <svg width="23" height="20" viewBox="0 0 23 20">
        <path fill="#e9ad2c" d="M1 1h8l2 2h11v15H1z" /><path fill="#fbdf86" d="M1 5h21v13H1z" /><path fill="#3ba9de" d="M5 10.500h13V19h-4v-4.500H9V19H5z" />
      </svg>
    </TaskButton>
    <TaskButton $bar="#b3a6ef">
      <svg width="24" height="24" viewBox="0 0 24 24">
        <circle cx="12" cy="12" r="12" fill="#33a852" />
        <path fill="#fccd2e" d="M12 12L22.400 6A12 12 0 0 1 12 24z" /><path fill="#e33b2e" d="M1.600 6L7 15l5-9h10.400A12 12 0 0 0 1.600 6z" />
        <circle cx="12" cy="12" r="5.600" fill="#fff" /><circle cx="12" cy="12" r="4.400" fill="#3b7ded" />
      </svg>
    </TaskButton>
    <TaskButton $bar="#b3a6ef">
      <svg width="24" height="22" viewBox="0 0 24 22">
        <path fill="#5ba23c" d="M4 1l16-1 1 3-1 15-18-1L0 16 1 5z" /><path fill="#eff8e8" d="M5 2.500L19 2v15L3 16z" />
        <path fill="#fff" stroke="#77ad64" strokeWidth="0.700" d="M7 6l16 1-1 14.500L6 19z" /><path stroke="#3d8e2c" strokeWidth="2.800" d="M7 7l7 8M14 6.500L6 15" />
        <path fill="#6aad50" d="M16 9h2.500v2.500H16zM19.500 9h2.500v2.500h-2.500zM16 13h2.500v2.500H16zM19.500 13h2.500v2.500h-2.500zM9 17h4v2H9zM15 17h3v2.500h-3zM19.500 17h2v3h-2z" />
      </svg>
    </TaskButton>
    <TaskButton $bg="#484357" $bar="#b3a6ef">
      <TableauTile><TableauMark size={22} mono="#4389b8" /></TableauTile>
    </TaskButton>
    <TaskButton $bg="#a65e2e" $bar="#ff7200">
      <svg width="20" height="24" viewBox="0 0 20 24" fill="none">
        <path stroke="#d43c12" strokeWidth="4" d="M3 2.500Q16 0 17 9q0 6-6 7-6 0-6-6" />
        <path fill="#e4e4e4" d="M9 1l2 2v10l-1 3-2-2z" /><path fill="#b8b8b8" d="M16 7l-1 4-6 6-1-2z" />
        <circle cx="4" cy="18" r="2.700" stroke="#1464b6" strokeWidth="2.200" /><circle cx="11.500" cy="20.500" r="2.400" stroke="#35a5eb" strokeWidth="2.200" />
      </svg>
    </TaskButton>
    <Tray>
      <TrayItem><Ico s={14} h={10} c="#fff" sw={1.4}><path d="M1.500 8L7 2.500 12.500 8" /></Ico></TrayItem>
      <TrayItem><Ico s={18} c="#8c8c90"><path d="M3.500 15.500A12 12 0 0 1 16 4M6.500 15.500A9 9 0 0 1 16 7.500M9.500 15.500A6 6 0 0 1 16 10.500" /><circle cx="15" cy="15" r="1.500" fill="#8c8c90" stroke="none" /><path d="M3.500 1v5M1 2.300l5 2.500M6 2.300L1 4.800" stroke="#fff" strokeWidth="0.900" /></Ico></TrayItem>
      <TrayItem><Ico s={17} h={12} c="#fff"><path d="M6.500 2.500H14.500v7.500H4M16 4.800v3M1 2.500h4.500v2.500q0 1.500-2.200 1.500T1 5zM2 .500v2M4.500 .500v2M3.300 6.500V10h2" /><path d="M7.500 4.500h5v4h-6z" fill="#fff" stroke="none" /></Ico></TrayItem>
      <TrayItem><Ico s={18} h={14} c="#fff"><path d="M1.500 5h2.500l3.500-3.500v11L4 9H1.500zM9.800 4.500q2 2.500 0 5M12 3q3 4 0 8M14.300 1.300q4 5.700 0 11.400" /></Ico></TrayItem>
      <TrayItem><Ico s={18} c="#fff"><path d="M1.500 3.500L15.500 1.500v14L1.500 13.500zM4.500 7.500Q7 4 11 6V4M12.500 8Q10 11.500 6 10v2" /><circle cx="12.500" cy="13" r="4.500" fill="#e02337" stroke="none" /><path d="M12.500 10v3.700M12.500 14.500v1.300" stroke="#fff" /></Ico></TrayItem>
      <Clock>17:40<br />04-10-2023</Clock>
      <TrayItem $w={40}><Ico s={17} c="#fff"><path d="M1 1.500h15v11h-5L8.500 15.500 6 12.500H1z" /></Ico></TrayItem>
      <PeekLine />
    </Tray>
  </Taskbar>
);

const menus: [string, number][] = [
  ["File", 34], ["Data", 40], ["Worksheet", 72], ["Dashboard", 72], ["Story", 44], ["Analysis", 59],
  ["Map", 40], ["Format", 54], ["Server", 48], ["Window", 60], ["Help", 40],
];

export default function App() {
  return (
    <Screen>
      <GlobalStyle />
      <Window>
        <TitleBar>
          <AppIcon><TableauMark size={15} mono="#3581ad" /></AppIcon>
          <Text>Tableau - HR Analytic Story</Text>
          <WindowButtons>
            <WindowButton><Ico s={12} c="#000" sw={1}><path d="M2 6.500h10" /></Ico></WindowButton>
            <WindowButton><Ico s={10} c="#000" sw={1}><path d="M0.500 2.500h7v7h-7zM2.500 2.500v-2h7v7h-2" /></Ico></WindowButton>
            <WindowButton><Ico s={10} c="#000" sw={1.1}><path d="M0 0l10 10M10 0L0 10" /></Ico></WindowButton>
          </WindowButtons>
        </TitleBar>
        <MenuBar>{menus.map(([m, w]) => <MenuItem key={m} $w={w}>{m}</MenuItem>)}</MenuBar>
        <ToolbarSection />
        <Workspace>
          <DataSection />
          <CardsSection />
          <MainSection />
        </Workspace>
        <BottomSection />
      </Window>
      <TaskbarSection />
    </Screen>
  );
}
